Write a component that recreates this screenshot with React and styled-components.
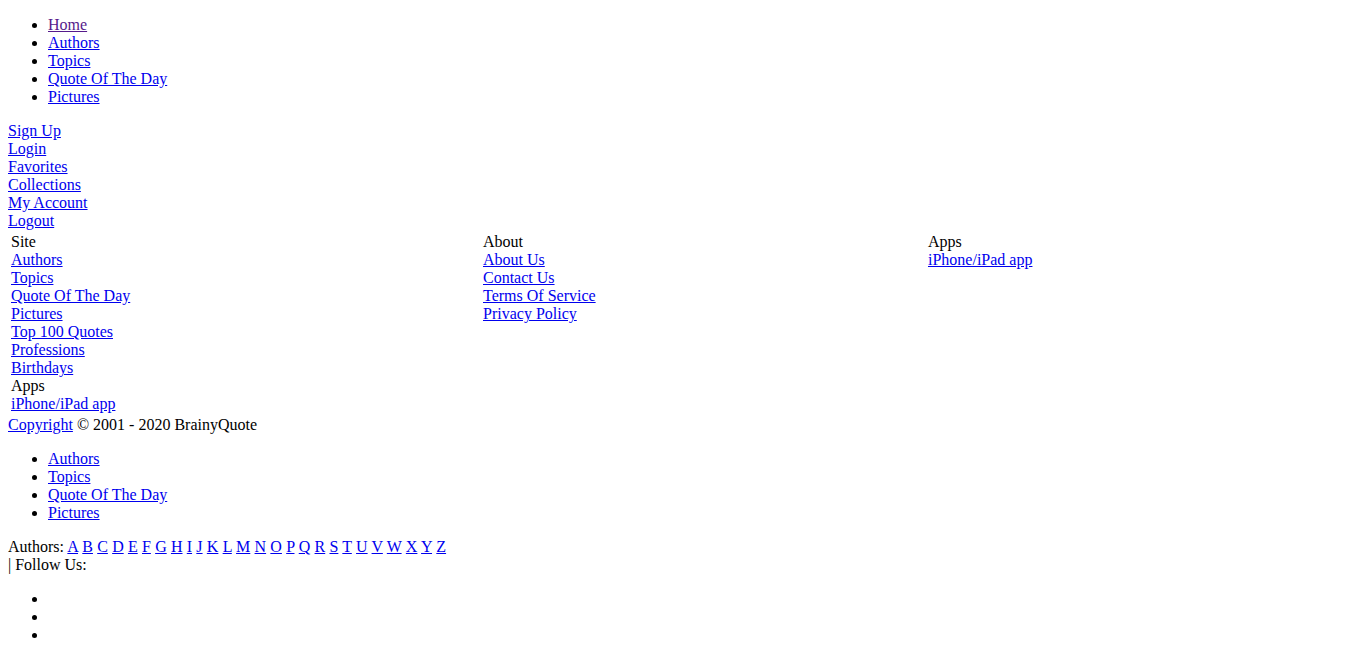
import React from "react";
import styled, { createGlobalStyle } from "styled-components";

const GlobalStyle = createGlobalStyle`
  body {
    margin: 0 8px 8px;
    font-family: "Liberation Serif", "Times New Roman", serif;
    font-size: 16px;
    line-height: 18px;
    color: #000;
    background: #fff;
  }
`;

const Link = styled.a`
  color: ${(p) => (p.$visited ? "#551A8B" : "#0000EE")};
  text-decoration: underline;
  cursor: pointer;
`;

const BulletList = styled.ul`
  margin: 16px 0;
  padding-left: 40px;
  list-style: disc;
`;

const Item = styled.li`
  min-height: 18px;
`;

const Block = styled.div``;

const FooterGrid = styled.div`
  display: grid;
  grid-template-columns: 472px 445px 1fr;
  padding: 3px 3px;
`;

const Column = styled.div`
  display: flex;
  flex-direction: column;
  align-items: flex-start;
`;

const Heading = styled.div``;

const Line = styled.div``;

const LetterLine = styled.div`
  word-spacing: 0.24px;
`;

const mainNav = ["Authors", "Topics", "Quote Of The Day", "Pictures"];
const accountLinks = ["Sign Up", "Login", "Favorites", "Collections", "My Account", "Logout"];
const siteLinks = ["Authors", "Topics", "Quote Of The Day", "Pictures", "Top 100 Quotes", "Professions", "Birthdays"];
const aboutLinks = ["About Us", "Contact Us", "Terms Of Service", "Privacy Policy"];
const letters = "ABCDEFGHIJKLMNOPQRSTUVWXYZ".split("");

export default function App() {
  return (
    <>
      <GlobalStyle />
      <BulletList>
        <Item>
          <Link $visited>Home</Link>
        </Item>
        {mainNav.map((t) => (
          <Item key={t}>
            <Link>{t}</Link>
          </Item>
        ))}
      </BulletList>
      <Block>
        {accountLinks.map((t) => (
          <Line key={t}>
            <Link>{t}</Link>
          </Line>
        ))}
      </Block>
      <FooterGrid>
        <Column>
          <Heading>Site</Heading>
          {siteLinks.map((t) => (
            <Link key={t}>{t}</Link>
          ))}
          <Heading>Apps</Heading>
          <Link>iPhone/iPad app</Link>
        </Column>
        <Column>
          <Heading>About</Heading>
          {aboutLinks.map((t) => (
            <Link key={t}>{t}</Link>
          ))}
        </Column>
        <Column>
          <Heading>Apps</Heading>
          <Link>iPhone/iPad app</Link>
        </Column>
      </FooterGrid>
      <Line>
        <Link>Copyright</Link> © 2001 - 2020 BrainyQuote
      </Line>
      <BulletList>
        {mainNav.map((t) => (
          <Item key={t}>
            <Link>{t}</Link>
          </Item>
        ))}
      </BulletList>
      <LetterLine>
        Authors:{" "}
        {letters.map((l, i) => (
          <React.Fragment key={l}>
            <Link>{l}</Link>
            {i < letters.length - 1 ? " " : ""}
          </React.Fragment>
        ))}
      </LetterLine>
      <Line>| Follow Us:</Line>
      <BulletList>
        <Item />
        <Item />
        <Item />
      </BulletList>
    </>
  );
}
